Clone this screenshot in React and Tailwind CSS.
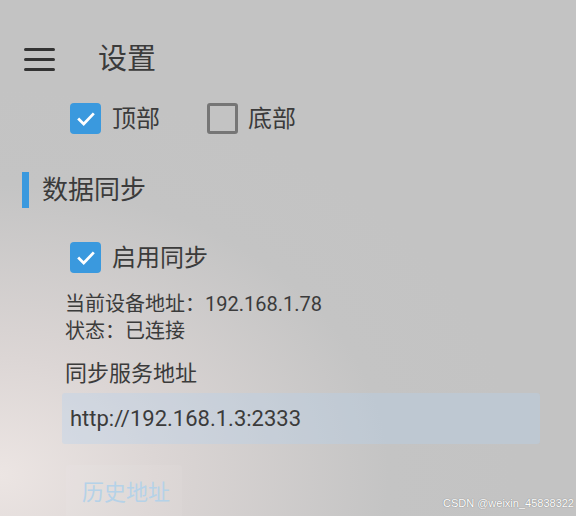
import React from "react";

function Check({ checked }) {
  if (checked) {
    return (
      <div className="w-[31px] h-[31px] rounded-[4px] bg-[#3a99de] flex items-center justify-center shrink-0">
        <svg width="22" height="22" viewBox="0 0 24 24" fill="none">
          <path d="M4.5 12.5l5 5L19.5 7" stroke="#ffffff" strokeWidth="3" strokeLinecap="square" />
        </svg>
      </div>
    );
  }
  return <div className="w-[31px] h-[31px] rounded-[3px] border-[3px] border-[#767676] shrink-0" />;
}

export default function App() {
  return (
    <div
      className="relative w-[576px] h-[516px] overflow-hidden text-[#3b3b3b] bg-[radial-gradient(ellipse_90%_75%_at_0%_92%,#ece5e3_0%,#dcd6d5_30%,#c4c4c4_75%,#c3c3c3_100%)]"
      style={{ fontFamily: "Roboto, 'Noto Sans CJK SC', sans-serif" }}
    >
      <div className="flex items-center mt-[35px] h-[48px] pl-[24px]">
        <div className="flex flex-col gap-[7px] w-[31px]">
          <div className="h-[3px] bg-[#333] rounded-full" />
          <div className="h-[3px] bg-[#333] rounded-full" />
          <div className="h-[3px] bg-[#333] rounded-full" />
        </div>
        <div className="ml-[43px] text-[29px] leading-none">设置</div>
      </div>

      <div className="flex items-center mt-[20px] h-[31px] pl-[70px]">
        <Check checked />
        <span className="ml-[11px] text-[24px] leading-none">顶部</span>
        <div className="ml-[47px]">
          <Check />
        </div>
        <span className="ml-[10px] text-[24px] leading-none">底部</span>
      </div>

      <div className="flex items-center mt-[38px] h-[36px] pl-[22px]">
        <div className="w-[7px] h-[36px] bg-[#3a99de]" />
        <span className="ml-[13px] text-[26px] leading-none">数据同步</span>
      </div>

      <div className="flex items-center mt-[34px] h-[31px] pl-[70px]">
        <Check checked />
        <span className="ml-[11px] text-[24px] leading-none">启用同步</span>
      </div>

      <div className="mt-[18px] pl-[65px] text-[20px] leading-[27px]">
        <div>当前设备地址：192.168.1.78</div>
        <div>状态：已连接</div>
      </div>

      <div className="mt-[16px] pl-[65px] text-[22px] leading-[26px]">同步服务地址</div>

      <div className="mt-[6px] ml-[62px] w-[478px] h-[51px] rounded-[3px] bg-[rgba(180,210,240,0.33)] flex items-center pl-[8px] text-[22px]">
        http://192.168.1.3:2333
      </div>

      <div className="mt-[21px] ml-[66px] w-[116px] h-[55px] rounded-[3px] bg-[rgba(255,255,255,0.06)] flex items-center pl-[16px] text-[22px] text-[#b5d2e8]">
        历史地址
      </div>

      <div
        className="absolute right-[2px] bottom-[7px] text-[11px] leading-none text-white [text-shadow:0_0_1px_rgba(0,0,0,0.5)]"
        style={{ fontFamily: "'Liberation Sans', sans-serif" }}
      >
        CSDN @weixin_45838322
      </div>
    </div>
  );
}
